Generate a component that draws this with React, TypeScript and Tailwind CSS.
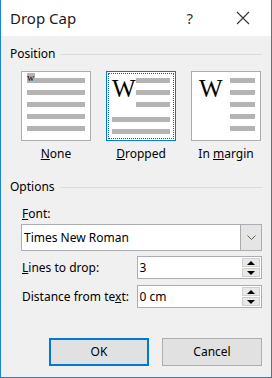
import React from 'react';

const Bar = ({ className = '' }: { className?: string }) => (
  <div className={`h-[5px] bg-[#b4b4b4] ${className}`} />
);

const Thumb = ({
  label,
  selected = false,
  children,
}: {
  label: React.ReactNode;
  selected?: boolean;
  children: React.ReactNode;
}) => (
  <div className="flex w-[70px] flex-col items-center">
    <div
      className={`relative h-[70px] w-[70px] bg-white ${
        selected ? 'border border-[#0078d7]' : 'border border-[#adadad]'
      }`}
    >
      {selected ? (
        <div className="absolute inset-[1px] border border-dotted border-[#1a5fa8]" />
      ) : null}
      {children}
    </div>
    <span className="mt-[5px] text-[12px] leading-[16px] text-black">{label}</span>
  </div>
);

const GroupHeader = ({ title }: { title: string }) => (
  <div className="flex items-center">
    <span className="text-[12px] leading-[16px] text-black">{title}</span>
    <div className="ml-[5px] h-px flex-1 bg-[#dcdcdc]" />
  </div>
);

const Spinner = ({ value }: { value: string }) => (
  <div className="flex h-[23px] w-[126px] items-center border border-[#abadb3] bg-white">
    <span className="flex-1 pl-[2px] text-[12px] leading-[16px] text-black">{value}</span>
    <div className="mr-px flex h-full flex-col justify-center gap-px py-px">
      <div className="flex h-[9px] w-[18px] items-center justify-center border border-[#cfcfcf] bg-[#e8e8e8]">
        <div className="h-0 w-0 border-x-[4px] border-b-[4px] border-x-transparent border-b-black" />
      </div>
      <div className="flex h-[9px] w-[18px] items-center justify-center border border-[#cfcfcf] bg-[#e8e8e8]">
        <div className="h-0 w-0 border-x-[4px] border-t-[4px] border-x-transparent border-t-black" />
      </div>
    </div>
  </div>
);

export default function App() {
  const serif = "font-['Liberation_Serif','Times_New_Roman',serif]";

  return (
    <div className="flex h-[378px] w-[272px] flex-col border-x border-b border-[#1883d7] bg-[#f0f0f0] font-['Noto_Sans','Open_Sans',sans-serif] text-black">
      {/* title bar */}
      <div className="flex h-[36px] items-center bg-white pl-[9px]">
        <span className="text-[15px] leading-[20px] text-[#1a1a1a]">Drop Cap</span>
        <span className="ml-auto mr-[43px] text-[15px] leading-[20px] text-[#333]">?</span>
        <svg width="14" height="14" viewBox="0 0 14 14" className="mr-[21px]">
          <path d="M1 1 L13 13 M13 1 L1 13" stroke="#333" strokeWidth="1.1" fill="none" />
        </svg>
      </div>

      <div className="flex flex-col px-[9px]">
        <div className="mt-[10px]">
          <GroupHeader title="Position" />
        </div>

        {/* thumbnails */}
        <div className="mt-[9px] flex gap-[15px] pl-[11px]">
          <Thumb
            label={
              <>
                <u>N</u>one
              </>
            }
          >
            <div className="relative flex flex-col gap-[7px] px-[5px] pt-[6px]">
              <Bar />
              <Bar />
              <Bar />
              <Bar />
              <Bar />
              <span
                className={`absolute left-[5px] top-[1px] bg-[#b4b4b4] pr-px text-[10px] leading-[10px] ${serif}`}
              >
                w
              </span>
            </div>
          </Thumb>

          <Thumb
            selected
            label={
              <>
                <u>D</u>ropped
              </>
            }
          >
            <div className="flex flex-col gap-[7px] px-[5px] pt-[6px]">
              <div className="flex">
                <span className={`-mt-[4px] h-[36px] w-[24px] text-[25px] leading-[30px] ${serif}`}>W</span>
                <div className="flex flex-1 flex-col gap-[7px]">
                  <Bar />
                  <Bar />
                  <Bar />
                </div>
              </div>
              <Bar />
              <Bar />
            </div>
          </Thumb>

          <Thumb
            label={
              <>
                In <u>m</u>argin
              </>
            }
          >
            <div className="flex px-[5px] pt-[6px]">
              <span className={`-mt-[4px] ml-[2px] w-[31px] text-[25px] leading-[30px] ${serif}`}>W</span>
              <div className="flex flex-1 flex-col gap-[7px]">
                <Bar />
                <Bar />
                <Bar />
                <Bar />
                <Bar />
              </div>
            </div>
          </Thumb>
        </div>

        <div className="mt-[17px]">
          <GroupHeader title="Options" />
        </div>

        <div className="flex flex-col pl-[11px]">
          <span className="mt-[11px] pl-px text-[12px] leading-[16px]">
            <u>F</u>ont:
          </span>
          <div className="mt-[2px] flex h-[27px] items-center border border-[#abadb3] bg-white">
            <span className="flex-1 pl-[2px] text-[12px] leading-[16px]">Times New Roman</span>
            <div className="flex h-full w-[21px] items-center justify-center border-l border-[#acacac] bg-[#e5e5e5]">
              <svg width="9" height="5" viewBox="0 0 9 5">
                <path d="M0.5 0.5 L4.5 4.5 L8.5 0.5" stroke="#606060" strokeWidth="1" fill="none" />
              </svg>
            </div>
          </div>

          <div className="mt-[5px] flex items-center">
            <span className="w-[116px] pl-px text-[12px] leading-[16px]">
              <u>L</u>ines to drop:
            </span>
            <Spinner value="3" />
          </div>
          <div className="mt-[6px] flex items-center">
            <span className="w-[116px] pl-px text-[12px] leading-[16px]">
              Distance from te<u>x</u>t:
            </span>
            <Spinner value="0 cm" />
          </div>
        </div>

        {/* buttons */}
        <div className="mt-[30px] flex justify-end gap-[13px]">
          <button className="flex h-[28px] w-[100px] items-center justify-center border-2 border-[#0078d7] bg-[#e1e1e1] text-[12px] leading-[16px]">
            OK
          </button>
          <button className="flex h-[28px] w-[100px] items-center justify-center border border-[#adadad] bg-[#e1e1e1] text-[12px] leading-[16px]">
            Cancel
          </button>
        </div>
      </div>
    </div>
  );
}
